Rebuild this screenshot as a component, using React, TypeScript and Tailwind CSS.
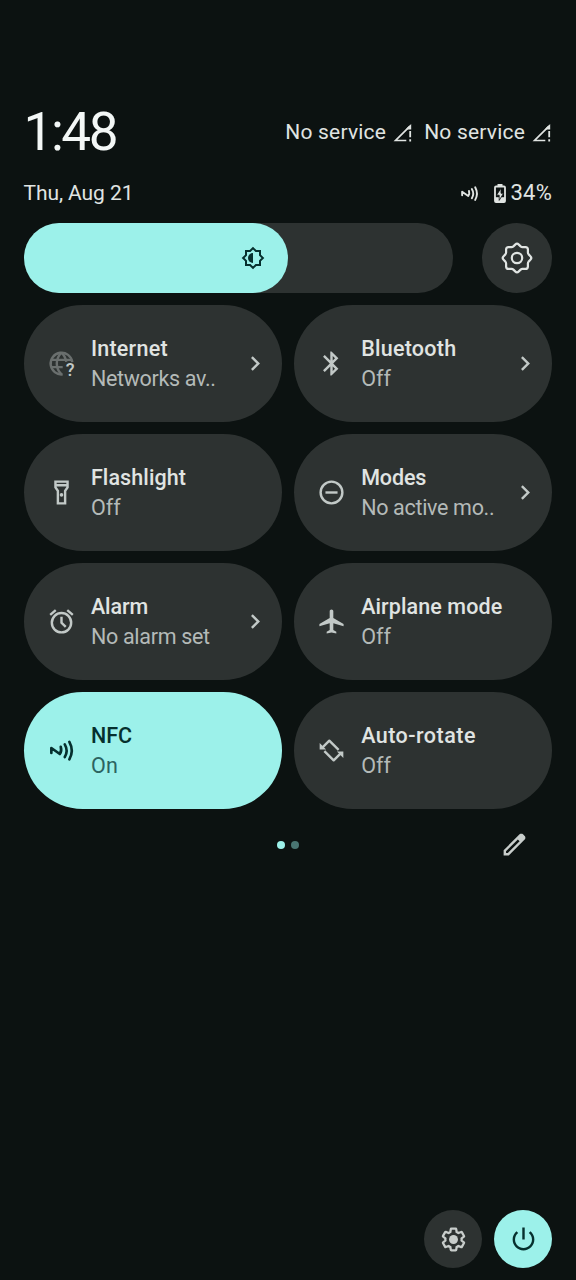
import React from 'react'
import clsx from 'clsx'

interface Tile {
  id: string
  title: string
  subtitle: string
  icon: React.ReactNode
  active?: boolean
  hasMenu?: boolean
  titleClass: string
  subtitleClass: string
}

interface IconProps {
  children: React.ReactNode
  className?: string
}

const Icon: React.FC<IconProps> = ({ children, className = 'size-[29px]' }) => (
  <svg viewBox="0 0 24 24" fill="currentColor" className={clsx('shrink-0 overflow-visible', className)}>
    {children}
  </svg>
)

const InternetIcon = () => (
  <Icon>
    <g fill="none" stroke="#6a6f6e" strokeWidth="2">
      <path d="M13 21A9 9 0 1 1 20.900 10.800" />
      <path d="M12 3c-5.200 5-5.200 13 0 18M12 3c2.300 2.200 3.600 4.800 3.900 7.600M3.700 9h16.600M3.700 15h9.300" />
    </g>
    <text x="15.600" y="22.400" fontSize="15" fontWeight="500" fontFamily="Roboto, sans-serif">?</text>
  </Icon>
)

const NfcIcon = ({ className }: { className?: string }) => (
  <Icon className={className}>
    <g fill="none" stroke="currentColor" strokeWidth="2.200" strokeLinecap="round" strokeLinejoin="round">
      <path d="M3.600 14V9.900L10.600 14.900Q12.400 12.400 11.400 9" />
      <path d="M14.700 6.900Q17.800 12.200 14.700 17.400" />
      <path d="M18.500 4.900Q22.500 12.200 18.500 19.300" />
    </g>
  </Icon>
)

const BluetoothIcon = () => (
  <Icon>
    <path d="M17.71 7.71L12 2h-1v7.590L6.410 5 5 6.410 10.590 12 5 17.590 6.410 19 11 14.410V22h1l5.710-5.710-4.300-4.290 4.300-4.290zM13 5.830l1.880 1.880L13 9.590V5.830zm1.880 10.460L13 18.170v-3.760l1.880 1.880z" />
  </Icon>
)

const FlashlightIcon = () => (
  <Icon>
    <path fillRule="evenodd" d="M18 2H6v6l2 3v11h8V11l2-3V2zM16 4v1H8V4h8zM14 10.400V20h-4v-9.610l-2-3V7h8v.390l-2 3.010z" />
    <circle cx="12" cy="14" r="1.500" />
  </Icon>
)

const ModesIcon = () => (
  <Icon>
    <circle cx="12" cy="12" r="9" fill="none" stroke="currentColor" strokeWidth="2" />
    <path d="M7 11h10v2H7z" />
  </Icon>
)

const AlarmIcon = () => (
  <Icon>
    <path d="M22 5.720l-4.600-3.860-1.290 1.530 4.600 3.860L22 5.720zM7.880 3.390L6.600 1.860 2 5.710l1.290 1.530 4.590-3.850z" />
    <circle cx="12" cy="13" r="8" fill="none" stroke="currentColor" strokeWidth="2" />
    <path d="M13 8h-2v5.400l3.800 3.800 1.400-1.400-3.200-3.200z" />
  </Icon>
)

const AirplaneIcon = () => (
  <Icon>
    <path d="M22 16v-2l-8.500-5V3.500c0-.830-.670-1.500-1.500-1.500s-1.500.670-1.500 1.500V9L2 14v2l8.500-2.500V19L8 20.500V22l4-1 4 1v-1.500L13.500 19v-5.500L22 16z" />
  </Icon>
)

const RotateIcon = () => (
  <Icon>
    <g fill="none" stroke="currentColor" strokeWidth="2" strokeLinejoin="round">
      <path d="M4.600 9.400L10.200 3.900 17.900 11.400" />
      <path d="M19.400 14.600L13.800 20.100 6.100 12.600" />
    </g>
    <path d="M2.200 5.800v5.300h5.300zM21.800 18.200v-5.300h-5.300z" />
  </Icon>
)

const ChevronIcon = () => (
  <Icon className="ml-auto size-[29px]">
    <path d="M9.700 6L8.290 7.410 12.870 12l-4.580 4.590L9.700 18l6-6z" />
  </Icon>
)

const SignalIcon = () => (
  <svg viewBox="0 0 20 20" className="size-5 shrink-0" fill="none" stroke="currentColor">
    <path d="M14.300 17.500H3.600L18 3.100" strokeWidth="1.700" />
    <path d="M19.200 1v5.500h-4.600V5.200z" fill="currentColor" stroke="none" />
    <path d="M18.200 8v6.300M18.200 16.300v2.100" strokeWidth="1.800" />
  </svg>
)

const BatteryIcon = () => (
  <svg viewBox="0 0 12 19" className="h-[19px] w-3 shrink-0">
    <path d="M3.500 0h5v2.300h-5z" fill="currentColor" />
    <rect x="1" y="2.500" width="10" height="15.500" rx="1" fill="none" stroke="currentColor" strokeWidth="1.800" />
    <path d="M1 13.200h10V18H1z" fill="currentColor" />
    <path d="M7 4.200L2.500 11.200h2.700v5.200L9.500 9.300H7z" fill="currentColor" stroke="#0c1211" strokeWidth="0.800" />
  </svg>
)

const tiles: Tile[] = [
  { id: 'internet', title: 'Internet', subtitle: 'Networks av..', icon: <InternetIcon />, hasMenu: true, titleClass: 'tracking-[0.250px]', subtitleClass: 'tracking-[-0.320px]' },
  { id: 'bluetooth', title: 'Bluetooth', subtitle: 'Off', icon: <BluetoothIcon />, hasMenu: true, titleClass: 'tracking-[0.250px]', subtitleClass: 'tracking-[0px]' },
  { id: 'flashlight', title: 'Flashlight', subtitle: 'Off', icon: <FlashlightIcon />, titleClass: 'tracking-[0.100px]', subtitleClass: 'tracking-[0px]' },
  { id: 'modes', title: 'Modes', subtitle: 'No active mo..', icon: <ModesIcon />, hasMenu: true, titleClass: 'tracking-[-0.100px]', subtitleClass: 'tracking-[-0.320px]' },
  { id: 'alarm', title: 'Alarm', subtitle: 'No alarm set', icon: <AlarmIcon />, hasMenu: true, titleClass: 'tracking-[-0.100px]', subtitleClass: 'tracking-[-0.300px]' },
  { id: 'airplane', title: 'Airplane mode', subtitle: 'Off', icon: <AirplaneIcon />, titleClass: 'tracking-[0.100px]', subtitleClass: 'tracking-[0px]' },
  { id: 'nfc', title: 'NFC', subtitle: 'On', icon: <NfcIcon className="size-[29px]" />, active: true, titleClass: 'tracking-[0px]', subtitleClass: 'tracking-[0.200px]' },
  { id: 'rotate', title: 'Auto-rotate', subtitle: 'Off', icon: <RotateIcon />, titleClass: 'tracking-[0.480px]', subtitleClass: 'tracking-[0px]' },
]

const TileButton: React.FC<{ tile: Tile }> = ({ tile }) => (
  <button
    className={clsx(
      'flex h-[117px] items-center rounded-full pr-3 pl-[23.400px] text-left whitespace-nowrap',
      tile.active ? 'bg-[#9cf1ea] text-[#06302e]' : 'bg-[#2d3231] text-[#c2c9c7]'
    )}
  >
    {tile.icon}
    <div className="ml-[15px] text-[21.500px] leading-[30px]">
      <div className={clsx('font-medium', tile.titleClass, !tile.active && 'text-[#e0e4e2]')}>{tile.title}</div>
      <div className={clsx(tile.subtitleClass, tile.active ? 'text-[#2c6461]' : 'text-[#b4bab8]')}>{tile.subtitle}</div>
    </div>
    {tile.hasMenu && <ChevronIcon />}
  </button>
)

const App: React.FC = () => {
  return (
    <div className="flex h-[1280px] w-[576px] flex-col bg-[#0c1211] pt-[101px] pr-6 pb-3 pl-[23.500px] font-['Roboto',sans-serif] text-[#e0e4e2]">
      {/* Clock and carriers */}
      <div className="flex h-[62px] items-center justify-between">
        <div className="text-[53px] leading-[62px] tracking-[-2.400px] text-[#f3f7f6]">1:48</div>
        <div className="flex items-center pt-0.5 pr-px text-[21px] tracking-[0.200px]">
          <span className="mr-[6px]">No service</span>
          <SignalIcon />
          <span className="mr-[6px] ml-3">No service</span>
          <SignalIcon />
        </div>
      </div>

      {/* Date and status icons */}
      <div className="mt-[17px] flex h-[28px] items-center justify-between text-[21px]">
        <div className="tracking-[-0.080px]">Thu, Aug 21</div>
        <div className="flex items-center pb-0.5">
          <NfcIcon className="mr-[13.500px] size-[21px]" />
          <BatteryIcon />
          <span className="ml-[5px] text-[22px] leading-[26px] tracking-[0.200px]">34%</span>
        </div>
      </div>

      {/* Brightness */}
      <div className="mt-[15px] flex justify-between">
        <div className="h-[70px] w-[429px] overflow-hidden rounded-full bg-[#2d3231]">
          <div className="flex h-full w-[264.500px] items-center justify-end rounded-r-full bg-[#9cf1ea] pr-[23px] text-[#06302e]">
            <Icon className="size-6">
              <path fill="none" stroke="currentColor" strokeWidth="2" d="M19 9.100V5h-4.100L12 2.100 9.100 5H5v4.100L2.100 12 5 14.900V19h4.100l2.900 2.900 2.900-2.900H19v-4.100l2.900-2.900z" />
              <path d="M12 7v10a5 5 0 0 1 0-10z" />
            </Icon>
          </div>
        </div>
        <button className="flex size-[70px] items-center justify-center rounded-full bg-[#2d3231]">
          <svg viewBox="-17 -17 34 34" className="size-[34px]" fill="none" stroke="currentColor" strokeWidth="2.200" strokeLinejoin="round">
            <path d="M-1.800-13.400Q0-15.200 1.800-13.400L3.600-11.600Q4.400-10.900 5.400-10.900H8.400Q10.900-10.900 10.900-8.400V-5.400Q10.900-4.400 11.600-3.600L13.400-1.800Q15.200 0 13.400 1.800L11.600 3.600Q10.900 4.400 10.900 5.400V8.400Q10.900 10.900 8.400 10.900H5.400Q4.400 10.900 3.600 11.600L1.800 13.400Q0 15.200-1.800 13.400L-3.600 11.600Q-4.400 10.900-5.400 10.900H-8.400Q-10.900 10.900-10.900 8.400V5.400Q-10.900 4.400-11.600 3.600L-13.400 1.800Q-15.200 0-13.400-1.800L-11.600-3.600Q-10.900-4.400-10.900-5.400V-8.400Q-10.900-10.900-8.400-10.900H-5.400Q-4.400-10.900-3.600-11.600z" />
            <circle r="5.200" />
          </svg>
        </button>
      </div>

      {/* Tiles */}
      <div className="mt-3 grid grid-cols-2 gap-3">
        {tiles.map((tile) => (
          <TileButton key={tile.id} tile={tile} />
        ))}
      </div>

      {/* Pager and edit */}
      <div className="mt-[21px] grid h-[29px] grid-cols-[1fr_auto_1fr] items-center">
        <div className="col-start-2 flex gap-1.5">
          <span className="size-2 rounded-full bg-[#9cf1ea]" />
          <span className="size-2 rounded-full bg-[#4a7572]" />
        </div>
        <button className="mr-[23.500px] justify-self-end text-[#c8cdcb]">
          <Icon>
            <path d="M5 19h1.425L16.200 9.225 14.775 7.800 5 17.575V19Zm-2 2v-4.250L16.200 3.575q.3-.275.663-.425t.762-.15q.4 0 .775.15t.65.45L20.425 5q.3.275.438.65T21 6.400q0 .4-.138.763t-.437.662L7.250 21H3Z" />
          </Icon>
        </button>
      </div>

      {/* Footer */}
      <div className="mt-auto flex justify-end gap-3">
        <button className="flex size-[58px] items-center justify-center rounded-full bg-[#2d3231] text-[#c8cdcb]">
          <Icon>
            <path
              transform="translate(1.200 1.200) scale(.9)"
              fill="none"
              stroke="currentColor"
              strokeWidth="2.100"
              d="M19.430 12.980c.04-.32.07-.64.07-.98 0-.34-.03-.66-.07-.98l2.110-1.650c.19-.15.24-.42.12-.64l-2-3.460c-.09-.16-.26-.25-.44-.25-.06 0-.12.01-.17.03l-2.490 1c-.52-.4-1.080-.73-1.690-.98l-.38-2.650C14.460 2.180 14.250 2 14 2h-4c-.25 0-.46.18-.49.42l-.38 2.650c-.61.25-1.170.59-1.690.98l-2.490-1c-.06-.02-.12-.03-.18-.03-.17 0-.34.09-.43.25l-2 3.460c-.13.22-.07.49.12.64l2.110 1.650c-.04.32-.07.65-.07.98 0 .33.03.66.07.98l-2.110 1.650c-.19.15-.24.42-.12.64l2 3.460c.09.16.26.25.44.25.06 0 .12-.01.17-.03l2.490-1c.52.4 1.080.73 1.690.98l.38 2.650c.03.24.24.42.49.42h4c.25 0 .46-.18.49-.42l.38-2.650c.61-.25 1.170-.59 1.690-.98l2.490 1c.06.02.12.03.18.03.17 0 .34-.09.43-.25l2-3.460c.12-.22.07-.49-.12-.64z"
            />
            <circle cx="12" cy="12" r="3.700" />
          </Icon>
        </button>
        <button className="flex size-[58px] items-center justify-center rounded-full bg-[#9cf1ea] text-[#06302e]">
          <Icon>
            <path d="M13 2h-2v10h2V2zm4.830 3.170l-1.420 1.420C17.990 7.860 19 9.810 19 12c0 3.870-3.130 7-7 7s-7-3.130-7-7c0-2.190 1.010-4.140 2.580-5.420L6.170 5.170C4.230 6.820 3 9.260 3 12c0 4.970 4.030 9 9 9s9-4.030 9-9c0-2.740-1.230-5.180-3.170-6.830z" />
          </Icon>
        </button>
      </div>
    </div>
  )
}

export default App
